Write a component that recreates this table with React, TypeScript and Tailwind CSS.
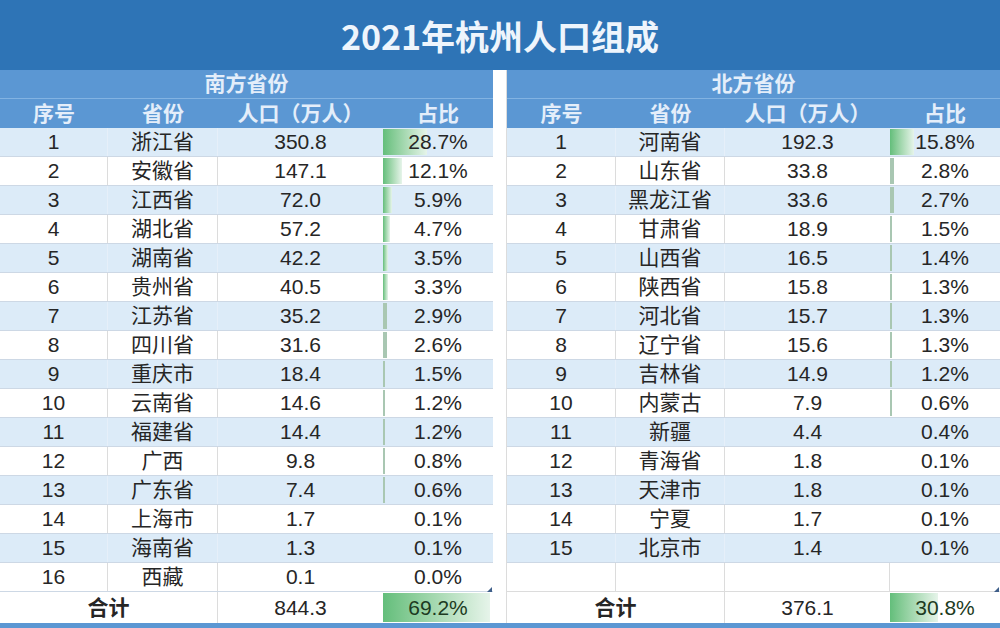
import React from "react";

type Row = [number, string, string, string];

const south: Row[] = [
  [1, "浙江省", "350.8", "28.7%"],
  [2, "安徽省", "147.1", "12.1%"],
  [3, "江西省", "72.0", "5.9%"],
  [4, "湖北省", "57.2", "4.7%"],
  [5, "湖南省", "42.2", "3.5%"],
  [6, "贵州省", "40.5", "3.3%"],
  [7, "江苏省", "35.2", "2.9%"],
  [8, "四川省", "31.6", "2.6%"],
  [9, "重庆市", "18.4", "1.5%"],
  [10, "云南省", "14.6", "1.2%"],
  [11, "福建省", "14.4", "1.2%"],
  [12, "广西", "9.8", "0.8%"],
  [13, "广东省", "7.4", "0.6%"],
  [14, "上海市", "1.7", "0.1%"],
  [15, "海南省", "1.3", "0.1%"],
  [16, "西藏", "0.1", "0.0%"],
];

const north: Row[] = [
  [1, "河南省", "192.3", "15.8%"],
  [2, "山东省", "33.8", "2.8%"],
  [3, "黑龙江省", "33.6", "2.7%"],
  [4, "甘肃省", "18.9", "1.5%"],
  [5, "山西省", "16.5", "1.4%"],
  [6, "陕西省", "15.8", "1.3%"],
  [7, "河北省", "15.7", "1.3%"],
  [8, "辽宁省", "15.6", "1.3%"],
  [9, "吉林省", "14.9", "1.2%"],
  [10, "内蒙古", "7.9", "0.6%"],
  [11, "新疆", "4.4", "0.4%"],
  [12, "青海省", "1.8", "0.1%"],
  [13, "天津市", "1.8", "0.1%"],
  [14, "宁夏", "1.7", "0.1%"],
  [15, "北京市", "1.4", "0.1%"],
];

const barWidth = (pct: string) => {
  const v = parseFloat(pct);
  if (v < 0.5) return 0;
  return Math.max(v * 1.55, 2);
};

function PctCell({ pct, w, total }: { pct: string; w: string; total?: boolean }) {
  const bw = barWidth(pct);
  return (
    <div className={`relative ${w} h-full flex items-center justify-center`}>
      {bw > 0 && (
        <div
          className={`absolute left-0 top-[1px] bottom-[1px] bg-gradient-to-r ${
            bw < 5 ? "from-[#a9c7b2] to-[#a9c7b2]" : "from-[#63be7b] to-[#e6f4ea]"
          }`}
          style={{ width: bw }}
        />
      )}
      <span className={`relative ${total ? "text-[#1d3b22]" : ""}`}>{pct}</span>
    </div>
  );
}

function Table({
  title,
  rows,
  cols,
  totalPop,
  totalPct,
  fill,
}: {
  title: string;
  rows: Row[];
  cols: string[];
  totalPop: string;
  totalPct: string;
  fill: number;
}) {
  const [c1, c2, c3, c4] = cols;
  return (
    <div className="w-[493px] flex flex-col">
      <div className="h-[29px] bg-[#5b97d3] border-b border-[#82b3e2] flex items-center justify-center text-[21px] font-bold text-[#e4eefa]">
        {title}
      </div>
      <div className="h-[29px] bg-[#5b97d3] flex items-center text-[21px] font-bold text-[#e4eefa]">
        <div className={`${c1} text-center`}>序号</div>
        <div className={`${c2} text-center`}>省份</div>
        <div className={`${c3} text-center`}>人口（万人）</div>
        <div className={`${c4} text-center`}>占比</div>
      </div>
      {rows.map((r, i) => {
        const blue = i % 2 === 0;
        const vline = blue ? "border-r border-[#e6eff9]" : "border-r border-[#dcdcdc]";
        return (
          <div
            key={r[0]}
            className={`h-[29px] flex items-center border-b border-[#cdd8e5] text-[21px] text-[#262626] ${
              blue ? "bg-[#dcebf8]" : "bg-white"
            }`}
          >
            <div className={`${c1} h-full flex items-center justify-center ${vline}`}>{r[0]}</div>
            <div className={`${c2} h-full flex items-center justify-center ${vline}`}>{r[1]}</div>
            <div className={`${c3} h-full flex items-center justify-center`}>{r[2]}</div>
            <PctCell pct={r[3]} w={c4} />
          </div>
        );
      })}
      {Array.from({ length: fill }).map((_, i) => (
        <div key={"f" + i} className="h-[29px] flex items-center border-b border-[#dcdcdc] bg-white">
          <div className={`${c1} h-full border-r border-[#dcdcdc]`} />
          <div className={`${c2} h-full border-r border-[#dcdcdc]`} />
          <div className={`${c3} h-full border-r border-[#dcdcdc]`} />
          <div className={`${c4} h-full`} />
        </div>
      ))}
      <div className="relative h-[31px] flex items-center bg-white text-[21px] text-[#262626]">
        <div className="absolute right-[1px] top-[-5px] w-0 h-0 border-l-[5px] border-l-transparent border-b-[5px] border-b-[#3f5f8a]" />
        <div className={`w-[218px] h-full flex items-center justify-center font-bold border-r border-[#dcdcdc]`}>合计</div>
        <div className={`${c3} h-full flex items-center justify-center`}>{totalPop}</div>
        <PctCell pct={totalPct} w={c4} total />
      </div>
    </div>
  );
}

export default function App() {
  return (
    <div
      className="w-[1000px] h-[628px] overflow-hidden bg-white flex flex-col"
      style={{ fontFamily: '"Liberation Sans", "Noto Sans CJK SC", sans-serif' }}
    >
      <div
        className="h-[70px] bg-[#2e74b6] flex items-center justify-center text-[34px] font-bold text-[#eef5fc]"
        style={{ fontFamily: '"Noto Sans CJK SC", "Liberation Sans", sans-serif' }}
      >
        2021年杭州人口组成
      </div>
      <div className="flex">
        <Table
          title="南方省份"
          rows={south}
          cols={["w-[108px]", "w-[110px]", "w-[165px]", "w-[110px]"]}
          totalPop="844.3"
          totalPct="69.2%"
          fill={0}
        />
        <div className="w-[14px] bg-white border-r border-[#dcdcdc]" />
        <Table
          title="北方省份"
          rows={north}
          cols={["w-[109px]", "w-[109px]", "w-[165px]", "w-[110px]"]}
          totalPop="376.1"
          totalPct="30.8%"
          fill={1}
        />
      </div>
      <div className="flex-1 bg-[#5b97d3]" />
    </div>
  );
}
